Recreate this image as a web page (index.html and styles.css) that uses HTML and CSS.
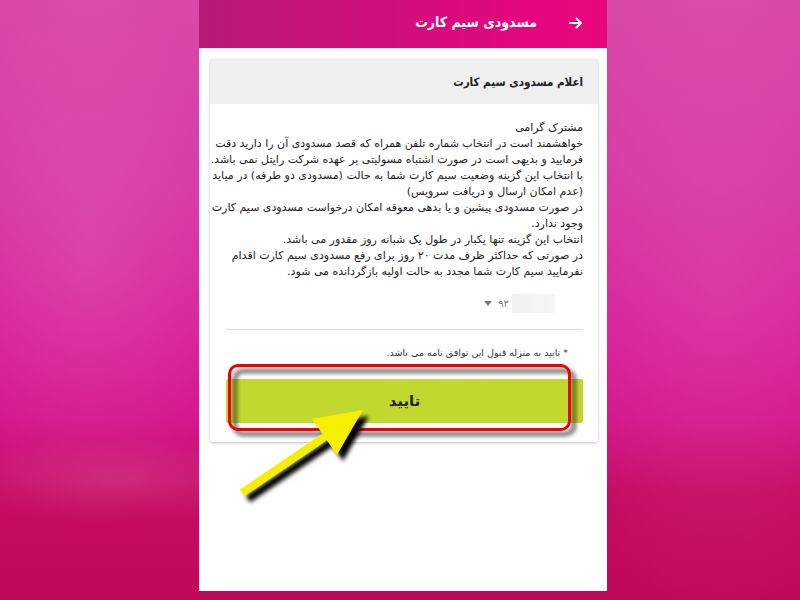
FILE: index.html
```html
<!DOCTYPE html>
<html lang="fa">
<head>
<meta charset="utf-8">
<title>مسدودی سیم کارت</title>
<link rel="stylesheet" href="styles.css">
</head>
<body>
<div class="bg">
  <div class="phone">
    <header class="topbar">
      <span class="back">
        <svg width="14" height="12" viewBox="0 0 14 12"><path d="M1 6H12M7.5 1.5L12 6L7.5 10.5" fill="none" stroke="#fff" stroke-width="2" stroke-linecap="round" stroke-linejoin="round"/></svg>
      </span>
      <span class="title">مسدودی سیم کارت</span>
    </header>
    <section class="card">
      <div class="card-head">اعلام مسدودی سیم کارت</div>
      <div class="card-body">
        <div class="text">
          <span>مشترک گرامی</span>
          <span>خواهشمند است در انتخاب شماره تلفن همراه که قصد مسدودی آن را دارید دقت</span>
          <span>فرمایید و بدیهی است در صورت اشتباه مسولیتی بر عهده شرکت رایتل نمی باشد.</span>
          <span>با انتخاب این گزینه وضعیت سیم کارت شما به حالت (مسدودی دو طرفه) در میاید</span>
          <span>(عدم امکان ارسال و دریافت سرویس)</span>
          <span>در صورت مسدودی پیشین و یا بدهی معوقه امکان درخواست مسدودی سیم کارت</span>
          <span>وجود ندارد.</span>
          <span>انتخاب این گزینه تنها یکبار در طول یک شبانه روز مقدور می باشد.</span>
          <span>در صورتی که حداکثر ظرف مدت ۲۰ روز برای رفع مسدودی سیم کارت اقدام</span>
          <span>نفرمایید سیم کارت شما مجدد به حالت اولیه بازگردانده می شود.</span>
        </div>
        <div class="select">
          <span class="blur"></span>
          <span class="num">۹۲</span>
          <span class="caret"></span>
        </div>
        <div class="divider"></div>
        <p class="note">* تایید به منزله قبول این توافق نامه می باشد.</p>
        <div class="btn-wrap">
          <button class="btn">تایید</button>
          <span class="anno-shadow"></span>
          <span class="anno"></span>
        </div>
      </div>
    </section>
    <svg class="arrow" width="408" height="591" viewBox="0 0 408 591">
      <defs>
        <filter id="b" x="-20%" y="-20%" width="140%" height="140%"><feGaussianBlur stdDeviation="2"/></filter>
      </defs>
      <polygon transform="translate(6 6)" filter="url(#b)" fill="#000" points="40.7,489.7 123.2,433.7 113,419 164,410 138,455 127.8,440.3 45.3,496.3"/>
      <polygon fill="#f7ef00" points="40.7,489.7 123.2,433.7 113,419 164,410 138,455 127.8,440.3 45.3,496.3"/>
    </svg>
  </div>
</div>
</body>
</html>
```

FILE: styles.css
```css
html, body {
  margin: 0;
  padding: 0;
}
body {
  width: 800px;
  height: 600px;
  overflow: hidden;
  font-family: "DejaVu Sans", "Noto Sans", sans-serif;
}
.bg {
  width: 800px;
  height: 600px;
  background:
    radial-gradient(ellipse 260px 60px at 120px 480px, rgba(255,255,255,0.10), rgba(255,255,255,0) 70%),
    radial-gradient(ellipse 200px 400px at 90px 250px, rgba(255,255,255,0.10), rgba(255,255,255,0) 70%),
    radial-gradient(ellipse 220px 500px at 720px 300px, rgba(255,255,255,0.08), rgba(255,255,255,0) 70%),
    linear-gradient(180deg, #d84aa9 0%, #d839a4 30%, #d8239a 55%, #d4168c 70%, #c60c64 82%, #c00858 100%);
}
.phone {
  position: relative;
  margin-left: 199px;
  width: 408px;
  height: 591px;
  background: #fff;
  direction: rtl;
}
.topbar {
  height: 48px;
  border-bottom: 1px solid #e9f1ee;
  background: linear-gradient(90deg, #b61a78 0%, #d00e7d 45%, #e4077f 80%, #e8067e 100%);
  display: flex;
  align-items: center;
  padding-right: 24px;
  gap: 32px;
  color: #fff;
}
.back {
  display: flex;
  width: 14px;
  height: 12px;
  margin-top: -2px;
}
.title {
  font-family: "DejaVu Sans Condensed", "DejaVu Sans", sans-serif;
  font-weight: bold;
  font-size: 14px;
  margin-top: -4px;
}
.card {
  margin: 10px 9px 0 11px;
  background: #fff;
  border-radius: 3px;
  box-shadow: 0 1px 3px rgba(0,0,0,0.25);
}
.card-head {
  height: 45px;
  background: #efefef;
  border-radius: 3px 3px 0 0;
  display: flex;
  align-items: center;
  padding-right: 15px;
  font-family: "DejaVu Sans Condensed", "DejaVu Sans", sans-serif;
  font-size: 11.5px;
  font-weight: bold;
  color: #222;
  box-sizing: border-box;
}
.card-body {
  padding: 16px 15px 19px 16px;
}
.text {
  display: flex;
  flex-direction: column;
  font-size: 11px;
  line-height: 16px;
  color: #1a1a1a;
  white-space: nowrap;
}
.select {
  display: flex;
  align-items: center;
  height: 19px;
  margin-top: 14px;
  margin-right: 28px;
  gap: 3px;
}
.blur {
  width: 43px;
  height: 19px;
  background: linear-gradient(90deg, #f1f1f1, #f6f6f6);
}
.num {
  font-size: 10px;
  color: #777;
}
.caret {
  width: 0;
  height: 0;
  border-left: 4px solid transparent;
  border-right: 4px solid transparent;
  border-top: 5px solid #777;
  margin-right: 3px;
}
.divider {
  margin-top: 16px;
  border-top: 1px solid #dedede;
}
.note {
  margin: 17px 15px 0 0;
  font-size: 9.5px;
  line-height: 12px;
  color: #333;
}
.btn-wrap {
  position: relative;
  margin-top: 20px;
}
.btn {
  display: block;
  width: 100%;
  height: 44px;
  border: 0;
  border-radius: 2px;
  background: #c3d82f;
  font-family: "DejaVu Sans", sans-serif;
  font-weight: bold;
  font-size: 15px;
  color: #222;
  padding: 0;
}
.anno, .anno-shadow {
  position: absolute;
  top: -15px;
  right: 12px;
  width: 343px;
  height: 67px;
  box-sizing: border-box;
  border-radius: 10px;
}
.anno-shadow {
  top: -10px;
  right: 7px;
  border: 4px solid rgba(30,30,30,0.7);
  filter: blur(2px);
}
.anno {
  border: 3px solid #f00000;
}
.arrow {
  position: absolute;
  left: 0;
  top: 0;
  pointer-events: none;
}
```
